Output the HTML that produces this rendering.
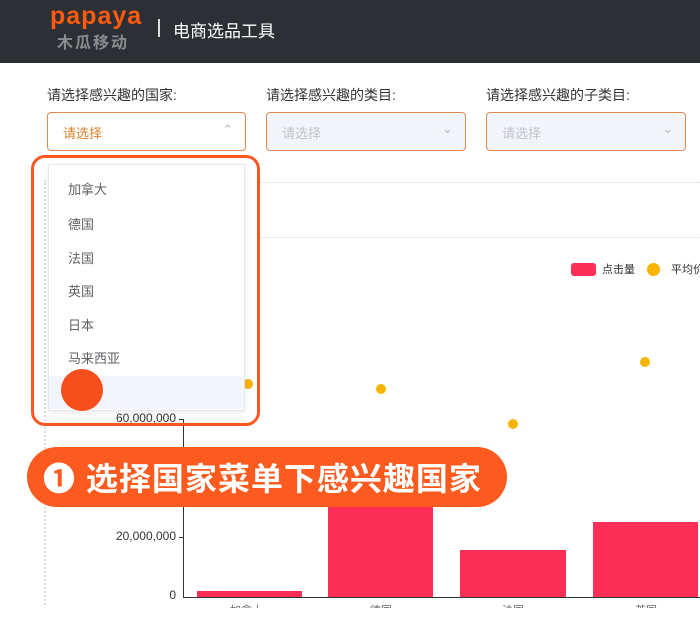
<!DOCTYPE html>
<html><head><meta charset="utf-8"><style>
*{margin:0;padding:0;box-sizing:border-box}
body{width:700px;height:640px;overflow:hidden;background:#fff;font-family:"Liberation Sans","Noto Sans CJK SC",sans-serif;position:relative}
.hdr{position:absolute;left:0;top:0;width:700px;height:63px;background:#2c3035}
.abs{position:absolute;white-space:nowrap}
.lbl{font-size:14px;color:#333;top:85px}
.box{position:absolute;top:112px;height:39px;border:1px solid #e0884e;border-radius:4px;font-size:13px;padding:10px 0 0 15px}
.item{position:absolute;left:68px;font-size:13px;color:#606266}
.bar{position:absolute;background:#fd2f57}
.dot{position:absolute;width:10px;height:10px;border-radius:50%;background:#f7b500}
.yl{position:absolute;font-size:12px;color:#333;text-align:right;width:100px}
</style></head><body>
<div class="hdr">
 <div class="abs" style="left:50px;top:2px;font-size:25px;font-weight:bold;color:#ff5a0e;letter-spacing:1px">papaya</div>
 <div class="abs" style="left:57px;top:29px;font-size:16px;font-weight:bold;color:#8a8c90;letter-spacing:2px">木瓜移动</div>
 <div class="abs" style="left:158px;top:19px;width:2px;height:18px;background:#ddd"></div>
 <div class="abs" style="left:173px;top:17px;font-size:17px;color:#fff">电商选品工具</div>
</div>
<div class="abs lbl" style="left:47px">请选择感兴趣的国家:</div>
<div class="abs lbl" style="left:266px">请选择感兴趣的类目:</div>
<div class="abs lbl" style="left:486px">请选择感兴趣的子类目:</div>
<div class="box" style="left:47px;width:199px;background:#fff;color:#d9822b">请选择<span class="abs" style="right:12px;top:9px;color:#bbb">&#8963;</span></div>
<div class="box" style="left:266px;width:200px;background:#f1f4fb;color:#c0c4cc">请选择<span class="abs" style="right:12px;top:8px;color:#bbb">&#8964;</span></div>
<div class="box" style="left:486px;width:200px;background:#f1f4fb;color:#c0c4cc">请选择<span class="abs" style="right:12px;top:8px;color:#bbb">&#8964;</span></div>
<div class="abs" style="left:258px;top:182px;width:442px;border-top:1px dotted #ddd"></div>
<div class="abs" style="left:258px;top:237px;width:442px;border-top:1px dotted #ddd"></div>
<div class="abs" style="left:44px;top:180px;height:425px;border-left:2px dotted #ddd"></div>
<div class="abs" style="left:571px;top:263px;width:25px;height:13px;border-radius:3px;background:#fd2f57"></div>
<div class="abs" style="left:602px;top:261px;font-size:11px;color:#333">点击量</div>
<div class="dot" style="left:647px;top:263px;width:13px;height:13px"></div>
<div class="abs" style="left:671px;top:261px;font-size:11px;color:#333">平均价</div>
<div class="abs" style="left:183px;top:419px;width:1px;height:179px;background:#333"></div>
<div class="abs" style="left:183px;top:597px;width:517px;height:1px;background:#333"></div>
<div class="yl" style="left:76px;top:411px">60,000,000</div>
<div class="yl" style="left:76px;top:529px">20,000,000</div>
<div class="yl" style="left:76px;top:588px">0</div>
<div class="abs" style="left:179px;top:419px;width:5px;height:1px;background:#333"></div>
<div class="abs" style="left:179px;top:537px;width:5px;height:1px;background:#333"></div>
<div class="bar" style="left:197px;top:591px;width:105px;height:6px"></div>
<div class="bar" style="left:328px;top:500px;width:105px;height:97px"></div>
<div class="bar" style="left:460px;top:550px;width:106px;height:47px"></div>
<div class="bar" style="left:593px;top:522px;width:105px;height:75px"></div>
<div class="dot" style="left:243px;top:379px"></div>
<div class="dot" style="left:376px;top:384px"></div>
<div class="dot" style="left:508px;top:419px"></div>
<div class="dot" style="left:640px;top:357px"></div>
<div class="abs" style="top:602px;left:0;width:700px;height:6px;overflow:hidden;font-size:11px;color:#666">
 <span class="abs" style="left:230px;top:0">加拿大</span><span class="abs" style="left:370px;top:0">德国</span><span class="abs" style="left:502px;top:0">法国</span><span class="abs" style="left:635px;top:0">英国</span></div>
<div class="abs" style="left:48px;top:164px;width:197px;height:247px;background:#fff;border:1px solid #e4e7ed;box-shadow:0 2px 8px rgba(0,0,0,.08)"></div>
<div class="abs" style="left:49px;top:376px;width:195px;height:33px;background:#f3f5fc"></div>
<div class="item" style="top:179px">加拿大</div>
<div class="item" style="top:214px">德国</div>
<div class="item" style="top:248px">法国</div>
<div class="item" style="top:281px">英国</div>
<div class="item" style="top:315px">日本</div>
<div class="item" style="top:348px">马来西亚</div>
<div class="abs" style="left:61px;top:369px;width:42px;height:42px;border-radius:50%;background:#f74f1c"></div>
<div class="abs" style="left:31px;top:155px;width:229px;height:271px;border:3px solid #ff5722;border-radius:14px"></div>
<div class="abs" style="left:27px;top:447px;width:480px;height:60px;border-radius:30px;background:#fc5a1e;color:#fff;font-size:32px;font-weight:bold;padding:7px 0 0 16px;letter-spacing:1px">❶ 选择国家菜单下感兴趣国家</div>
</body></html>
